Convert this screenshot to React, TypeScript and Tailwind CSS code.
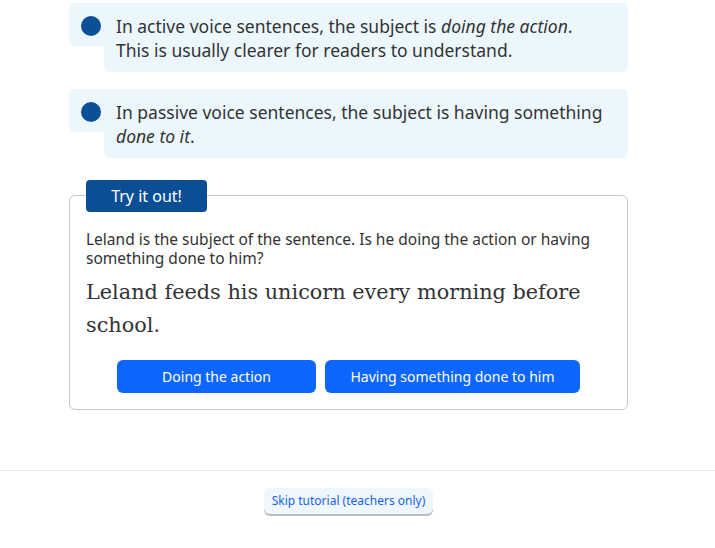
import React from "react";

const sans = "font-['Noto_Sans','Lato',sans-serif]";

function Bullet({ children }: { children: React.ReactNode }) {
  return (
    <div className="flex">
      <div className="h-[43px] w-[35px] shrink-0 rounded-l-md bg-[#ecf7fd] pl-3 pt-[13px]">
        <div className="h-5 w-5 rounded-full bg-[#0b4f96]" />
      </div>
      <div className="flex-1 rounded-r-md rounded-bl-md bg-[#ecf7fd] pb-[10px] pl-3 pr-4 pt-[11px] text-[17.5px] leading-6 text-[#333]">
        {children}
      </div>
    </div>
  );
}

export default function App() {
  return (
    <div className={`min-h-[548px] bg-white ${sans}`}>
      <div className="ml-[69px] w-[559px] pt-[3px]">
        <div className="flex flex-col gap-[17px]">
          <Bullet>
            In active voice sentences, the subject is <i>doing the action</i>.
            <br />
            This is usually clearer for readers to understand.
          </Bullet>
          <Bullet>
            In passive voice sentences, the subject is having something{" "}
            <i>done to it</i>.
          </Bullet>
        </div>

        <div className="relative mt-[37px] rounded-md border border-[#c8c8c8] px-4 pb-4 pt-[34px]">
          <div className="absolute left-4 top-[-16px] flex h-8 w-[121px] items-center justify-center rounded bg-[#0a4f96] text-base text-white">
            Try it out!
          </div>
          <p className="text-[15.5px] leading-[19px] text-[#333]">
            Leland is the subject of the sentence. Is he doing the action or
            having something done to him?
          </p>
          <p className="mt-2 font-['DejaVu_Serif',Georgia,serif] text-[20.8px] leading-[33px] text-[#333]">
            Leland feeds his unicorn every morning before school.
          </p>
          <div className="mt-[18px] flex justify-center gap-[9px]">
            <button className="h-[33px] w-[199px] rounded-md bg-[#0d66ff] text-[14px] text-white">
              Doing the action
            </button>
            <button className="h-[33px] w-[255px] rounded-md bg-[#0d66ff] text-[14px] text-white">
              Having something done to him
            </button>
          </div>
        </div>
      </div>

      <div className="mt-[60px] border-t border-[#e8e8e8]">
        <div className="ml-[69px] flex w-[559px] justify-center pt-[17px]">
          <button className="h-[26px] rounded-md bg-[#eef7fe] px-2 text-[12px] text-[#1a5ff0] shadow-[0_2px_0_#bdbdbd]">
            Skip tutorial (teachers only)
          </button>
        </div>
      </div>
    </div>
  );
}
